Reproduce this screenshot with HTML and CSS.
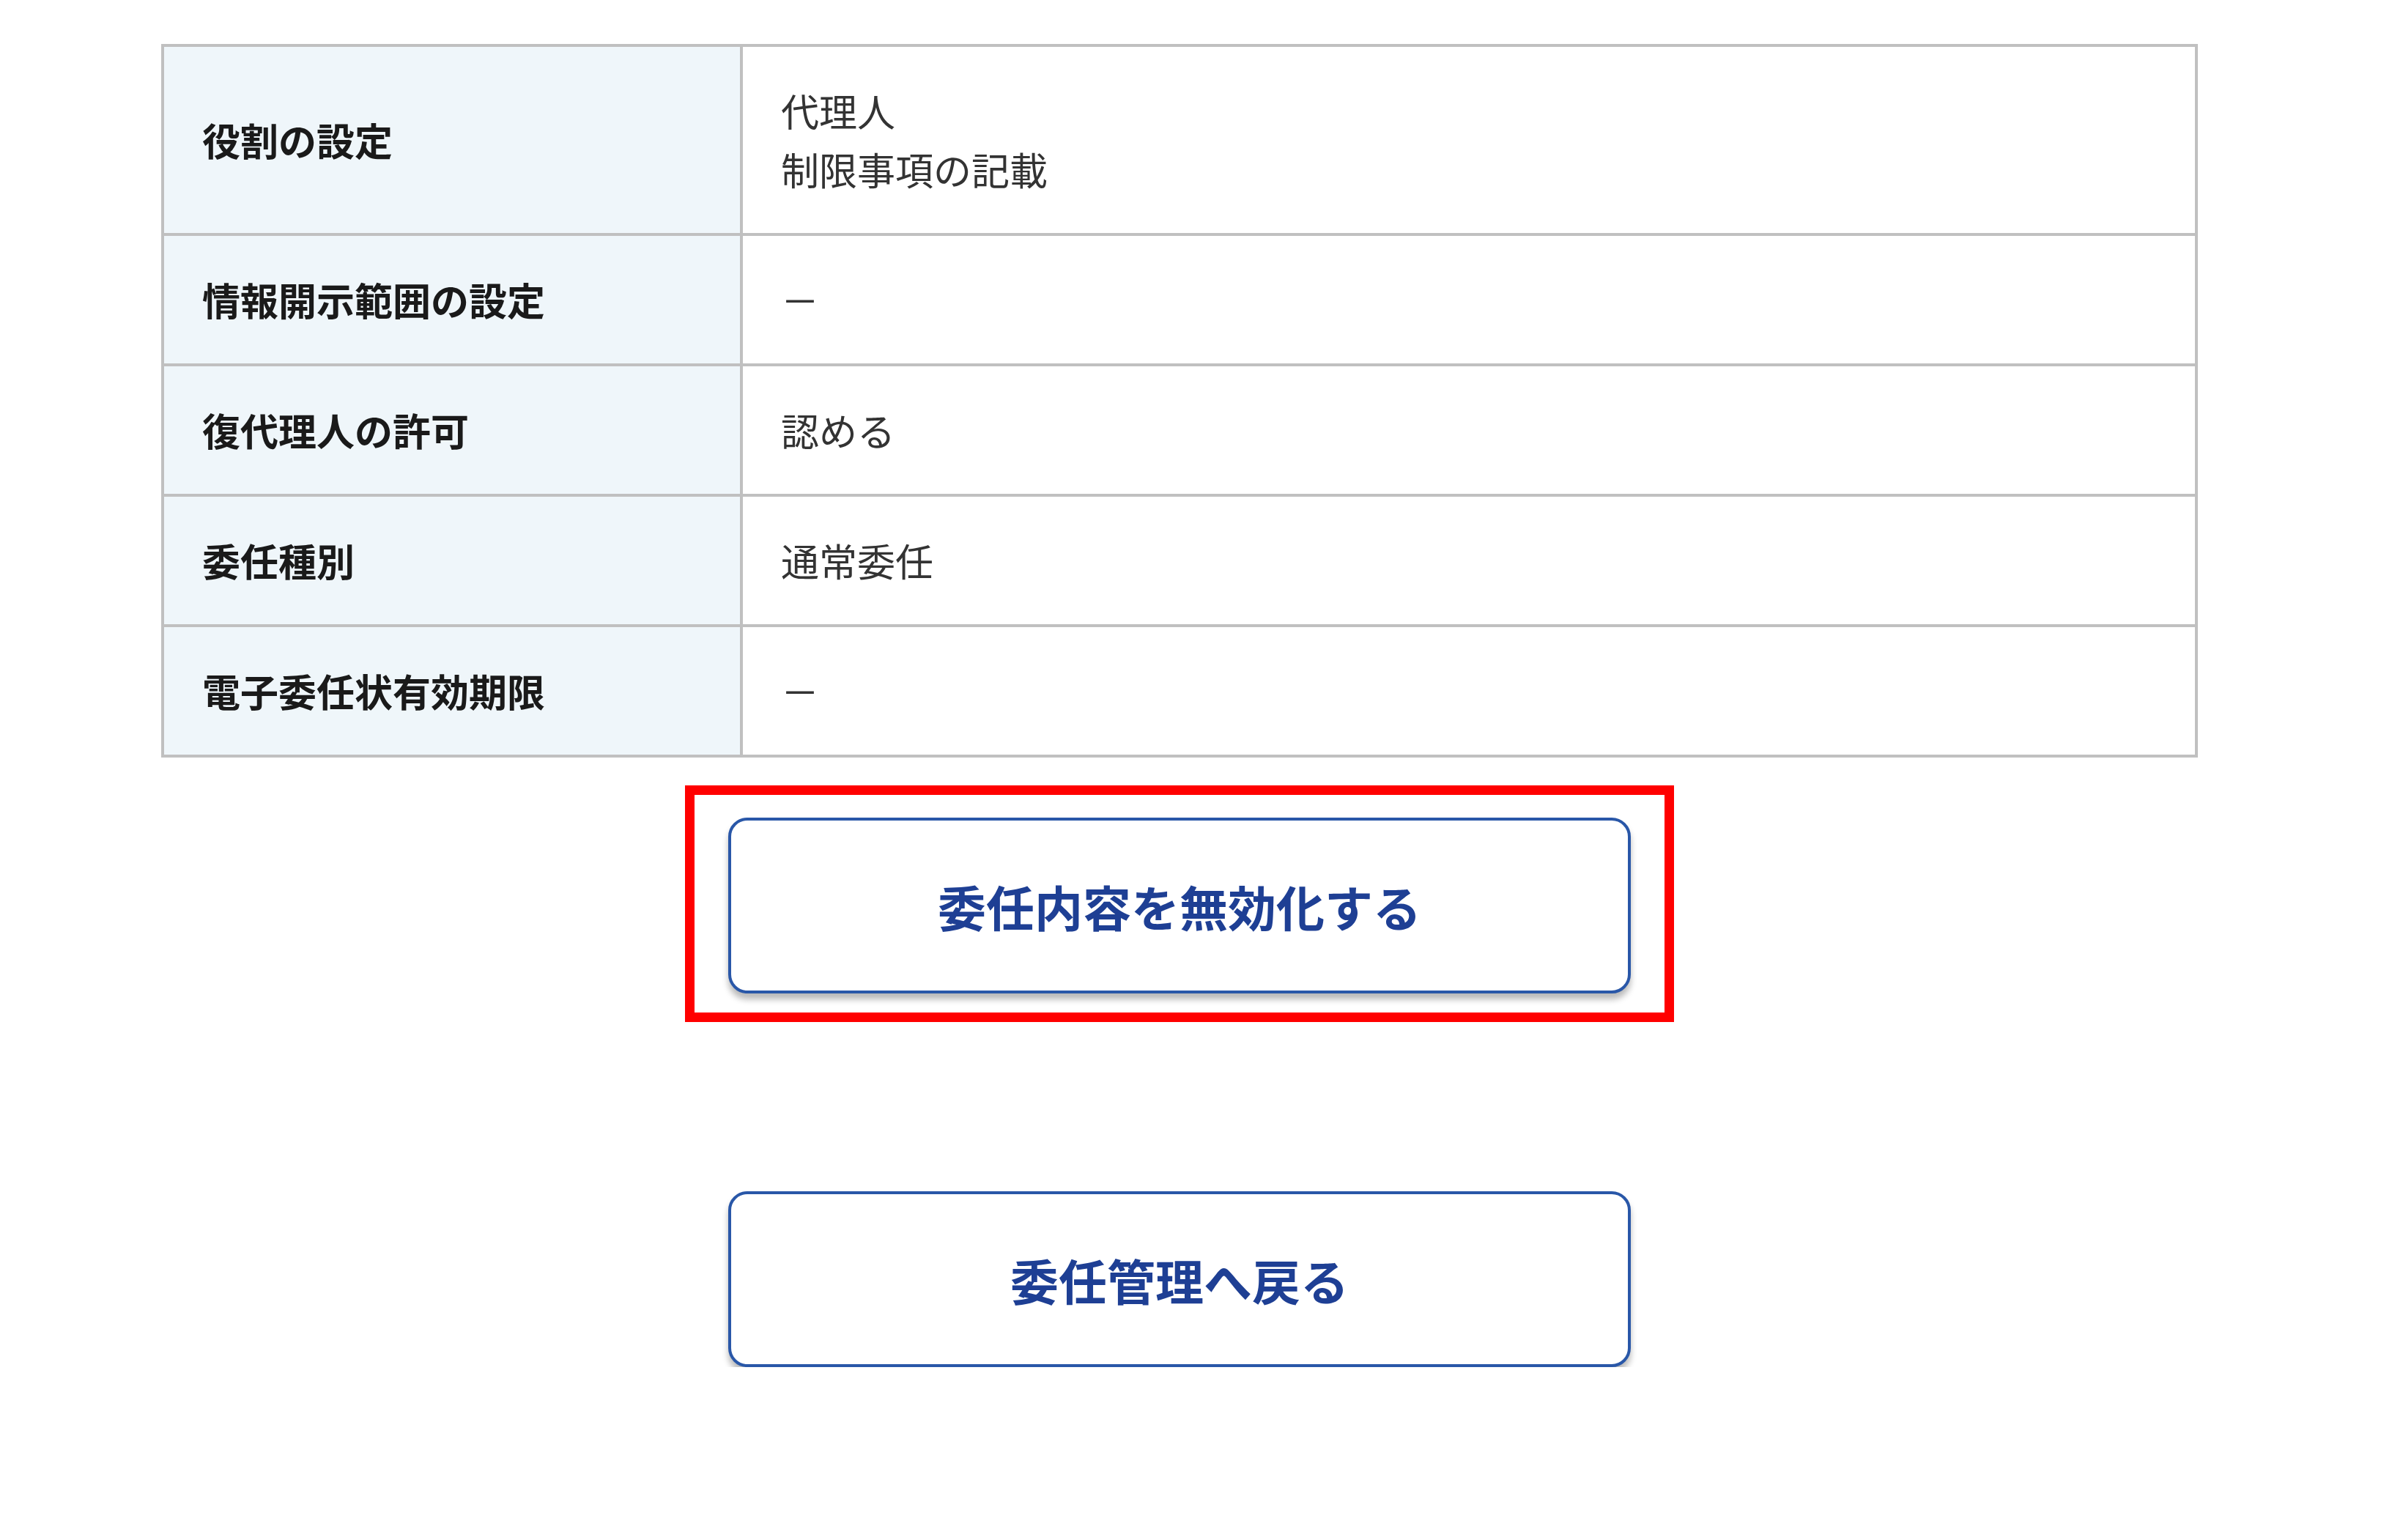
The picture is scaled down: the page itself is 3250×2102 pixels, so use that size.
FILE: index.html
```html
<!DOCTYPE html>
<html lang="ja">
<head>
    <meta charset="UTF-8">
    <meta name="viewport" content="width=device-width, initial-scale=1.0">
    <title>委任内容の確認</title>
    <link rel="stylesheet" href="styles.css">
</head>
<body>
    <div class="page">
        <table class="detail-table">
            <tr>
                <th>役割の設定</th>
                <td>代理人<br>制限事項の記載</td>
            </tr>
            <tr>
                <th>情報開示範囲の設定</th>
                <td>－</td>
            </tr>
            <tr>
                <th>復代理人の許可</th>
                <td>認める</td>
            </tr>
            <tr>
                <th>委任種別</th>
                <td>通常委任</td>
            </tr>
            <tr>
                <th>電子委任状有効期限</th>
                <td>－</td>
            </tr>
        </table>

        <div class="actions">
            <div class="highlight">
                <button class="btn" id="invalidate-btn">委任内容を無効化する</button>
            </div>
            <button class="btn btn-back" id="back-btn">委任管理へ戻る</button>
        </div>
    </div>
</body>
</html>
```

FILE: styles.css
```css
body {
    margin: 0;
    background-color: #fff;
    font-family: "Noto Sans CJK JP", "Noto Sans", sans-serif;
    color: #222;
}
.page {
    width: 2780px;
    margin-left: 220px;
    padding-top: 60px;
}
.detail-table {
    width: 100%;
    border-collapse: collapse;
    border: 4px solid #c0c0c0;
}
.detail-table th,
.detail-table td {
    border: 4px solid #c0c0c0;
    padding: 47px 52px;
    font-size: 52px;
    line-height: 80px;
    text-align: left;
    vertical-align: middle;
}
.detail-table th {
    width: 682px;
    background-color: #eff6fa;
    font-weight: bold;
    color: #1a1a1a;
}
.detail-table td {
    background-color: #fff;
    color: #333;
}
.actions {
    display: flex;
    flex-direction: column;
    align-items: center;
}
.highlight {
    margin-top: 38px;
    border: 13px solid #ff0000;
    padding: 31px 46px 26px;
}
.btn {
    display: block;
    width: 1232px;
    height: 240px;
    background-color: #fff;
    border: 4px solid #2957a8;
    border-radius: 26px;
    box-shadow: 0 8px 8px rgba(0, 0, 0, 0.28);
    font-family: "Noto Sans CJK JP", "Noto Sans", sans-serif;
    font-size: 66px;
    font-weight: bold;
    color: #1e3f94;
    cursor: pointer;
}
.btn-back {
    margin-top: 231px;
}
```
